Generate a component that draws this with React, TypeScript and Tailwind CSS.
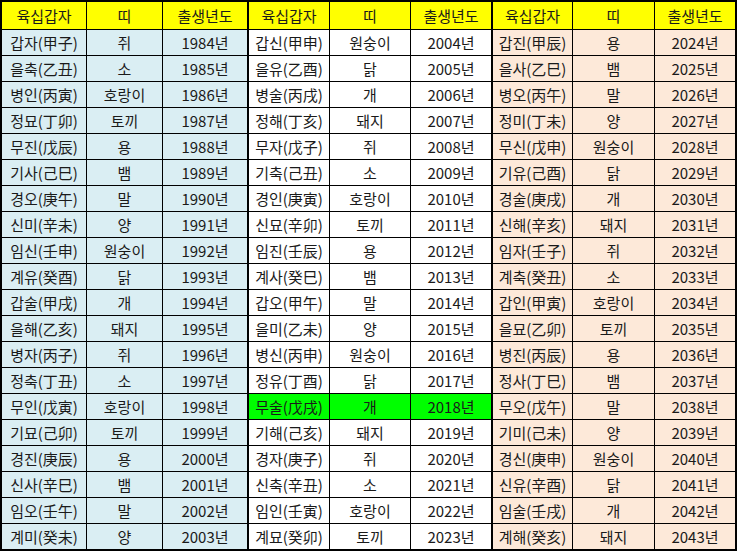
import React from "react";

const stemsK = "갑을병정무기경신임계";
const stemsH = "甲乙丙丁戊己庚辛壬癸";
const branchK = "자축인묘진사오미신유술해";
const branchH = "子丑寅卯辰巳午未申酉戌亥";
const animals = ["쥐", "소", "호랑이", "토끼", "용", "뱀", "말", "양", "원숭이", "닭", "개", "돼지"];

function info(y: number) {
  const s = (y - 4) % 10;
  const b = (y - 4) % 12;
  return {
    name: `${stemsK[s]}${branchK[b]}(${stemsH[s]}${branchH[b]})`,
    animal: animals[b],
    year: `${y}년`,
  };
}

const groupBg = ["bg-[#daeef3]", "bg-white", "bg-[#fde9d9]"];

export default function App() {
  const cells: React.ReactNode[] = [];
  const header = ["육십갑자", "띠", "출생년도"];
  for (let g = 0; g < 3; g++) {
    header.forEach((h, i) => {
      cells.push(
        <div key={`h-${g}-${i}`} className="bg-[#ffff00] flex items-center justify-center">
          {h}
        </div>
      );
    });
    if (g < 2) cells.push(<div key={`hs-${g}`} />);
  }
  for (let r = 0; r < 20; r++) {
    for (let g = 0; g < 3; g++) {
      const y = 1984 + g * 20 + r;
      const d = info(y);
      const bg = y === 2018 ? "bg-[#00ff00]" : groupBg[g];
      [d.name, d.animal, d.year].forEach((t, i) => {
        cells.push(
          <div key={`c-${r}-${g}-${i}`} className={`${bg} flex items-center justify-center`}>
            {t}
          </div>
        );
      });
      if (g < 2) cells.push(<div key={`s-${r}-${g}`} />);
    }
  }
  return (
    <div
      className="w-[737px] h-[551px] border-2 border-black bg-black grid gap-px grid-cols-[84px_75px_84px_0px_80px_80px_80px_0px_79px_81px_80px] grid-rows-[27px_repeat(20,25px)] text-[15px] leading-none text-[#1a1a1a]"
      style={{ fontFamily: '"Noto Sans CJK KR", "Noto Sans", sans-serif' }}
    >
      {cells}
    </div>
  );
}
